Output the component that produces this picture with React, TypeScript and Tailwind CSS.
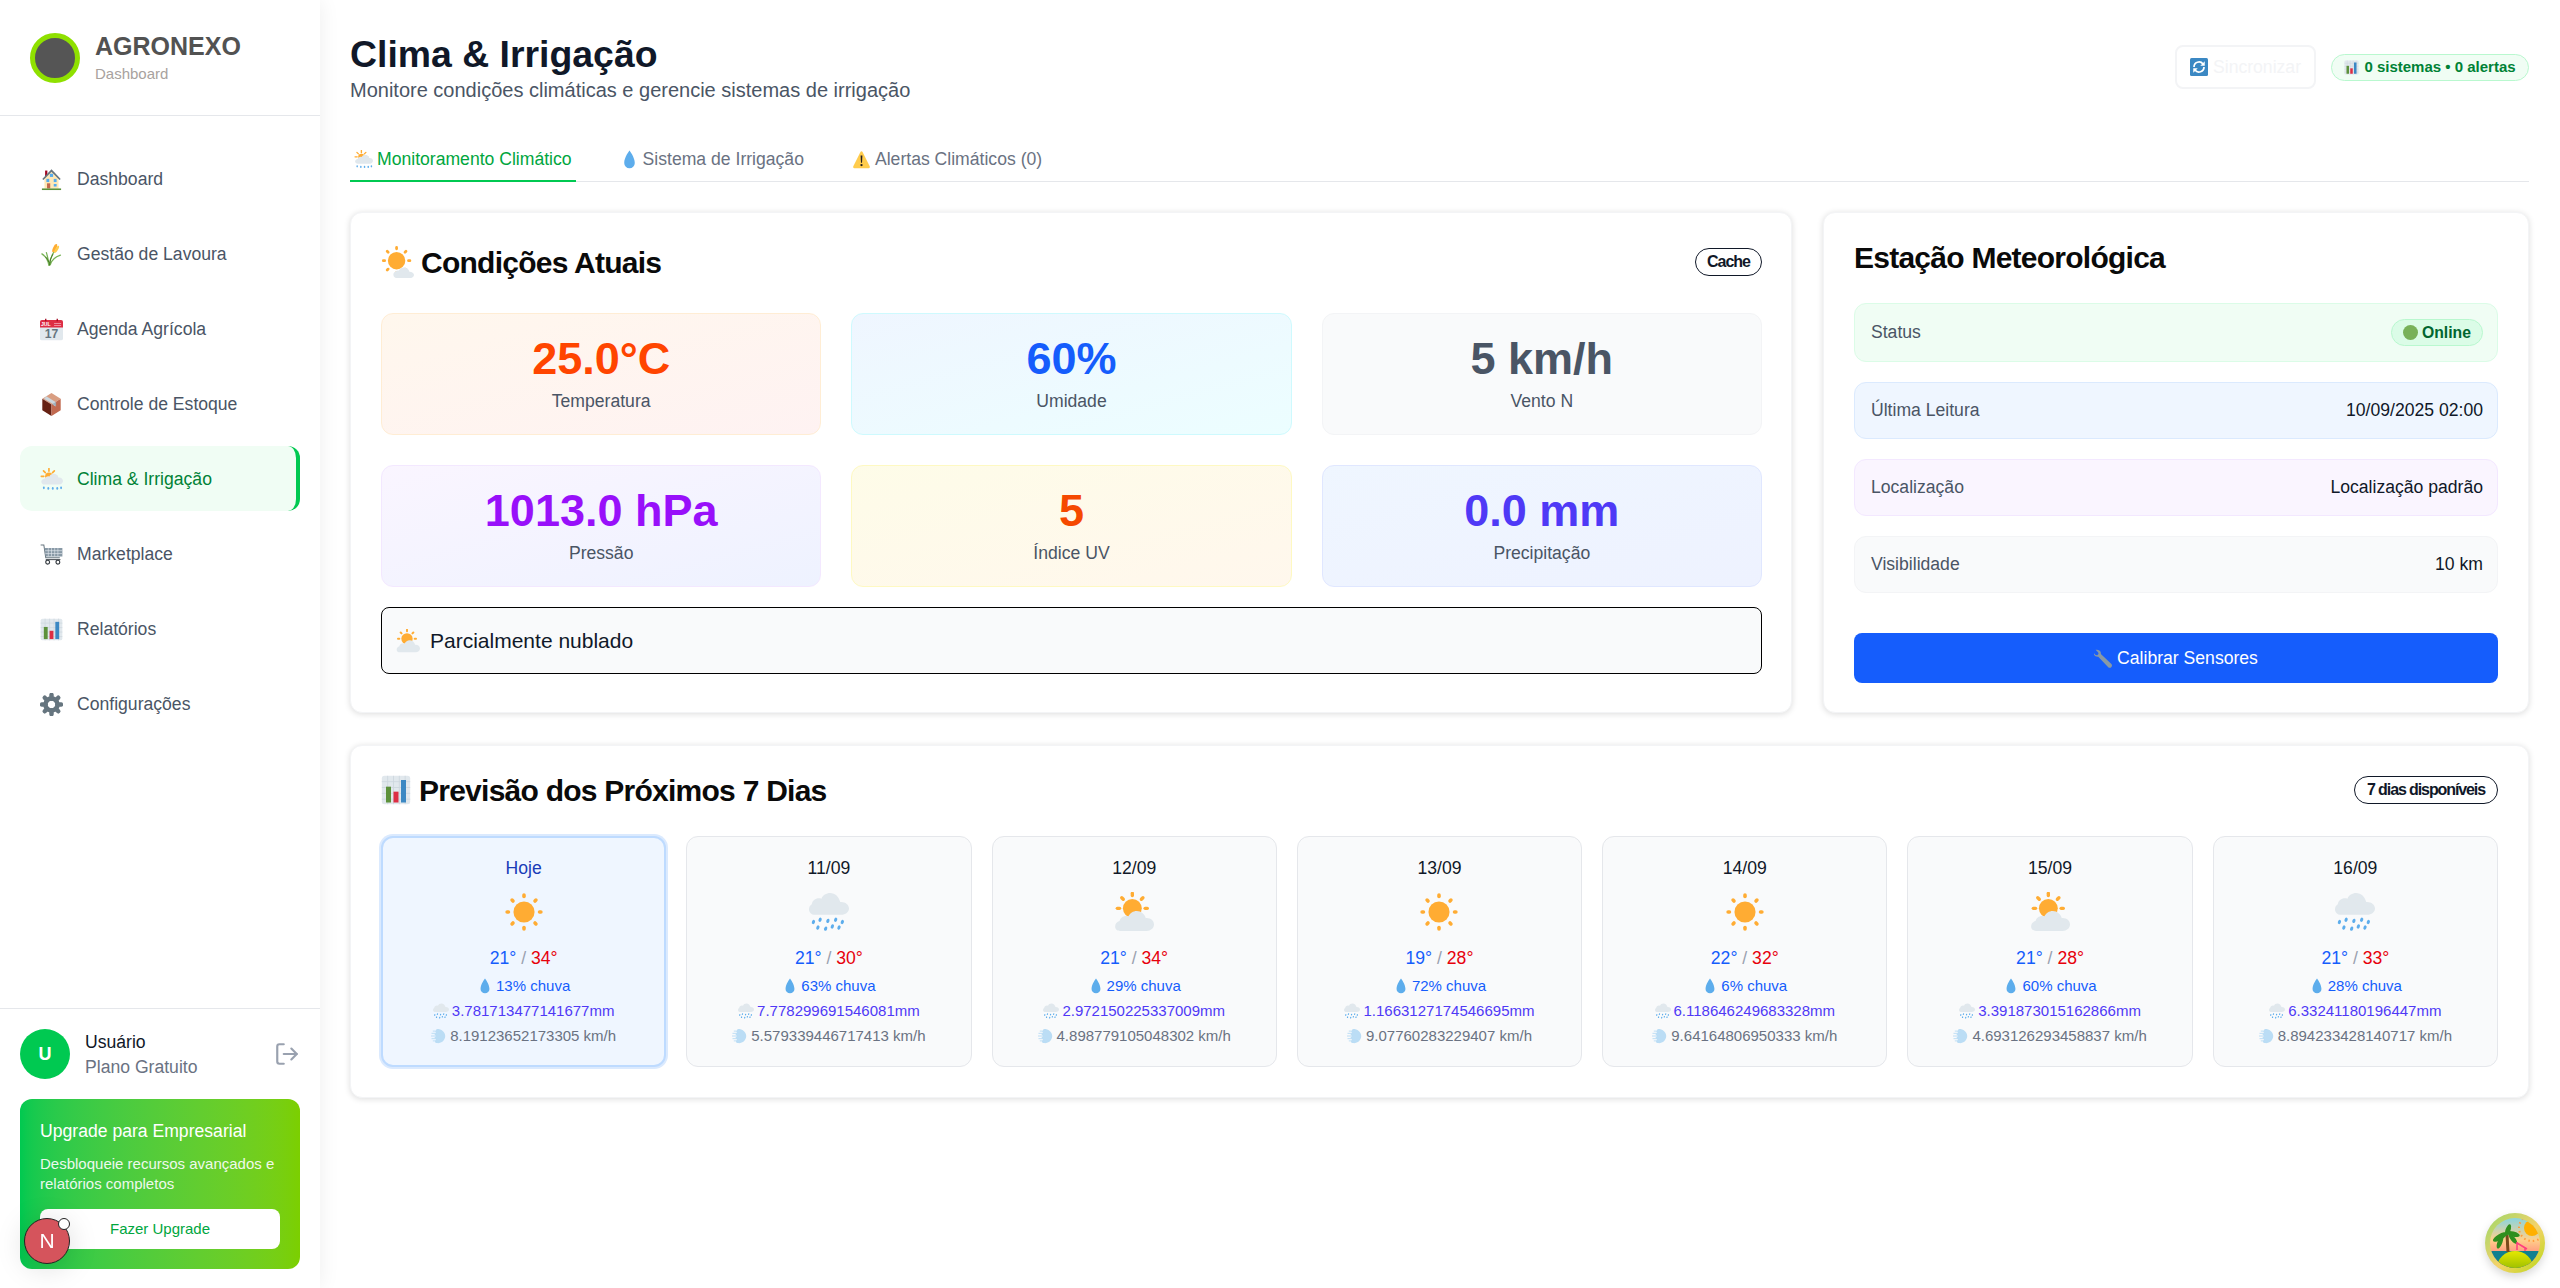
import { LogOut } from 'lucide-react'

type EmojiName =
  | 'house' | 'wheat' | 'calendar' | 'box' | 'sunRain' | 'cart' | 'chart' | 'gear' | 'drop' | 'warning'
  | 'sunSmallCloud' | 'sunCloud' | 'sun' | 'rain' | 'wind' | 'wrench' | 'sync' | 'greenDot'

// sun rays as rounded bars, angle list in degrees
function Rays({ cx, cy, inner, outer, angles, width = 2.6 }: { cx: number; cy: number; inner: number; outer: number; angles: number[]; width?: number }) {
  return (
    <>
      {angles.map((a) => (
        <line
          key={a}
          x1={cx}
          y1={cy - inner}
          x2={cx}
          y2={cy - outer}
          stroke="#FFAC33"
          strokeWidth={width}
          strokeLinecap="round"
          transform={`rotate(${a} ${cx} ${cy})`}
        />
      ))}
    </>
  )
}

const cloudWide = 'M29.5 23.5c-.3 0-.6 0-.9.1C27.8 19.9 24.5 17 20.5 17c-3.3 0-6.2 2-7.5 4.9-.6-.3-1.3-.4-2-.4-3 0-5.5 2-6 4.5C2.8 26.5 1 28.5 1 31c0 2.5 2 4 4.5 4h24c3.5 0 6.5-2.5 6.5-5.8 0-3.2-3-5.7-6.5-5.7z'

function Emoji({ name, size = 24 }: { name: EmojiName; size?: number }) {
  return (
    <svg width={size} height={size} viewBox="0 0 36 36" className="shrink-0 inline-block">
      {name === 'house' && (
        <>
          <rect x="8" y="4" width="3.5" height="9" fill="#A0041E" />
          <path fill="#FFE8B6" d="M7 15 18 4l11 11v17H7z" />
          <path fill="none" stroke="#66757F" strokeWidth="2.6" d="M4.5 18 18 4l13.5 14" />
          <rect x="15.5" y="9" width="5" height="5" fill="#55ACEE" />
          <rect x="10" y="17" width="4.5" height="5" fill="#55ACEE" />
          <rect x="21.5" y="17" width="4.5" height="5" fill="#55ACEE" />
          <rect x="21.5" y="25" width="4.5" height="4" fill="#55ACEE" />
          <rect x="11" y="24" width="5" height="8" fill="#C1694F" />
          <rect x="3" y="32" width="30" height="2.5" fill="#5C913B" />
        </>
      )}
      {name === 'wheat' && (
        <>
          <path fill="none" stroke="#77B255" strokeWidth="2" strokeLinecap="round" d="M14 35C13 27 9 21 3 17M15 35c0-8 3-15 7-21M16 34c2-7 7-12 16-15M14 33c-1-6-2-12-4-18" />
          <ellipse cx="23" cy="8" rx="2.6" ry="7" fill="#FFAC33" transform="rotate(25 23 8)" />
          <ellipse cx="26" cy="10" rx="2.2" ry="6.5" fill="#FFCC4D" transform="rotate(30 26 10)" />
          <path fill="none" stroke="#3E721D" strokeWidth="1.4" strokeLinecap="round" d="M15 34c1-7 2-12 5-16M14 30c-1-3-3-6-5-8" />
        </>
      )}
      {name === 'calendar' && (
        <>
          <path fill="#E1E8ED" d="M36 32a3 3 0 0 1-3 3H3a3 3 0 0 1-3-3V6a3 3 0 0 1 3-3h30a3 3 0 0 1 3 3z" />
          <path fill="#DD2E44" d="M33 3H3a3 3 0 0 0-3 3v9h36V6a3 3 0 0 0-3-3z" />
          <path fill="#A0041E" d="M8 1h2v4H8zM26 1h2v4h-2z" />
          <text x="1.5" y="12" fontSize="8" fontWeight="700" fill="#fff" fontFamily="Liberation Sans, sans-serif">JUL</text>
          <path fill="#F4ABBA" d="M22 8h11v1H22zM22 11h11v1H22z" />
          <text x="18" y="32" fontSize="19" fontWeight="700" textAnchor="middle" fill="#66757F" fontFamily="Liberation Sans, sans-serif">17</text>
        </>
      )}
      {name === 'box' && (
        <g transform="translate(1.8 0) scale(.9 1)">
          <path fill="#D99E82" d="M18 0 34 9 18 18 2 9z" />
          <path fill="#662113" d="M2 9l16 9v18L2 27z" />
          <path fill="#C1694F" d="M34 9 18 18v18l16-9z" />
          <path fill="#CCD6DD" d="M9 5l16 9v7l-5-3v-1L5 9z" />
          <path fill="#99AAB5" d="M20 17l6-3v7l-6-3z" opacity=".8" />
        </g>
      )}
      {name === 'sunRain' && (
        <>
          <circle cx="14" cy="13" r="6" fill="#FFAC33" />
          <Rays cx={14} cy={13} inner={8} outer={12} angles={[-90, -45, 0, 45, 90]} />
          <path fill="#E1E8ED" d="M30 15c-.3 0-.6 0-.9.1C28 11.500 25 9 21.500 9c-3 0-5.600 1.700-6.800 4.300-.7-.2-1.300-.3-2-.3-2.400 0-4.400 1.500-5 3.500C5 17 2 19 2 21.500 2 24 4.500 26 7 26h23c3.300 0 6-2.500 6-5.500S33.300 15 30 15z" />
          <g fill="#5DADEC">
            <ellipse cx="6" cy="31" rx="1.500" ry="2.200" />
            <ellipse cx="13" cy="32" rx="1.500" ry="2.200" />
            <ellipse cx="20" cy="32" rx="1.500" ry="2.200" />
            <ellipse cx="27" cy="32" rx="1.500" ry="2.200" />
            <ellipse cx="33" cy="31" rx="1.500" ry="2.200" />
          </g>
        </>
      )}
      {name === 'cart' && (
        <>
          <path fill="none" stroke="#66757F" strokeWidth="1.6" d="M1 3h5l3 20h22" />
          <path fill="#8899A6" d="M7 8h28v13H9z" />
          <path stroke="#E1E8ED" strokeWidth="1" d="M8 12h27M8.500 16.500h26M13 8v13M18 8v13M23 8v13M28 8v13" />
          <circle cx="12" cy="30" r="3" fill="#fff" stroke="#31373D" strokeWidth="1.8" />
          <circle cx="28" cy="30" r="3" fill="#fff" stroke="#31373D" strokeWidth="1.8" />
          <path fill="none" stroke="#31373D" strokeWidth="1.400" d="M9 26h23" />
        </>
      )}
      {name === 'chart' && (
        <>
          <rect x="1" y="1" width="34" height="34" rx="3" fill="#E1E8ED" />
          <path stroke="#CCD6DD" strokeWidth="1" d="M1 8h34M1 15h34M1 22h34M1 29h34M8 1v34M15 1v34M22 1v34M29 1v34" />
          <rect x="6" y="14" width="6" height="19" fill="#5C913B" />
          <rect x="15" y="20" width="6" height="13" fill="#DD2E44" />
          <rect x="24" y="6" width="6" height="27" fill="#3B88C3" />
        </>
      )}
      {name === 'gear' && (
        <g stroke="#66757F">
          <circle cx="18" cy="18" r="9.500" fill="none" strokeWidth="7" />
          {[0, 45, 90, 135, 180, 225, 270, 315].map((a) => (
            <line key={a} x1="18" y1="9" x2="18" y2="3" strokeWidth="7" strokeLinecap="round" transform={`rotate(${a} 18 18)`} />
          ))}
        </g>
      )}
      {name === 'drop' && <path fill="#5DADEC" d="M18 1S8 14 8 24.500a10 10 0 0 0 20 0C28 14 18 1 18 1z" />}
      {name === 'warning' && (
        <>
          <path fill="#FFCC4D" d="M2.500 31 16 4c1-2 3-2 4 0l13.500 27c1 2 0 3.500-2 3.500h-27c-2 0-3-1.500-2-3.500z" />
          <path fill="#231F20" d="M16.300 10.500h3.400L19 24h-2z" />
          <circle cx="18" cy="28.500" r="2.200" fill="#231F20" />
        </>
      )}
      {name === 'sunSmallCloud' && (
        <>
          <circle cx="17" cy="16" r="9.500" fill="#FFAC33" />
          <Rays cx={17} cy={16} inner={13} outer={14.500} angles={[0, 45, 90, 135, 180, 225, 270, 315]} width={3} />
          <path fill="#E1E8ED" d="M31 28c-.6-2.800-3-4.500-6-4.500-2.500 0-4.500 1.300-5.500 3.300-3 0-6 2-6 4.500S15.500 35 18 35h13c2.800 0 5-1.700 5-3.500s-2.200-3.500-5-3.500z" />
        </>
      )}
      {name === 'sunCloud' && (
        <>
          <Rays cx={16.500} cy={14.700} inner={11.500} outer={13.500} angles={[-90, -45, 0, 45, 90]} width={3} />
          <circle cx="16.500" cy="14.700" r="8.500" fill="#FFAC33" />
          <path fill="#E1E8ED" d={cloudWide} />
        </>
      )}
      {name === 'sun' && (
        <>
          <circle cx="18" cy="18" r="9.500" fill="#FFAC33" />
          <Rays cx={18} cy={18} inner={14} outer={15.200} angles={[0, 45, 90, 135, 180, 225, 270, 315]} width={3.200} />
        </>
      )}
      {name === 'rain' && (
        <>
          <path fill="#E1E8ED" d="M29 9c-.3 0-.6 0-.9.1C27 4.500 23.500 1 19 1c-3.500 0-6.500 2-7.800 5-.7-.2-1.400-.3-2.200-.3C5.500 5.700 3 8 2.500 11 1 12 0 13.500 0 15.500 0 18.500 2.500 20.500 5 20.500h24c3.800 0 7-2.500 7-5.700S32.800 9 29 9z" />
          <g fill="#5DADEC">
            <ellipse cx="4" cy="27" rx="1.400" ry="2" transform="rotate(20 4 27)" />
            <ellipse cx="10" cy="25" rx="1.400" ry="2" transform="rotate(20 10 25)" />
            <ellipse cx="17" cy="26" rx="1.400" ry="2" transform="rotate(20 17 26)" />
            <ellipse cx="24" cy="25" rx="1.400" ry="2" transform="rotate(20 24 25)" />
            <ellipse cx="30" cy="27" rx="1.400" ry="2" transform="rotate(20 30 27)" />
            <ellipse cx="8" cy="32" rx="1.400" ry="2" transform="rotate(20 8 32)" />
            <ellipse cx="15" cy="33" rx="1.400" ry="2" transform="rotate(20 15 33)" />
            <ellipse cx="21" cy="31" rx="1.400" ry="2" transform="rotate(20 21 31)" />
            <ellipse cx="27" cy="32" rx="1.400" ry="2" transform="rotate(20 27 32)" />
          </g>
        </>
      )}
      {name === 'wind' && (
        <>
          <path fill="#BBDDF5" d="M14 2c9 0 18 6 18 16s-9 17-18 16c-3 0-5-1.500-5-3 0-2 2-3 2-5s-3-2-3-4 3-2 3-4-3-2-3-4 3-2 3-4-3-2 0-4c1-3 1-4 3-4z" />
          <g stroke="#BBDDF5" strokeWidth="2.200" strokeLinecap="round">
            <path d="M2 12h9M0 18h11M2 24h9M5 7h6M5 29h6" />
          </g>
        </>
      )}
      {name === 'wrench' && (
        <path fill="#8899A6" d="M3 1.500 8 6.500l.5 3-2.500 2.500-3-.5L-1 7C-1 12 3 15 8 14.500l19 20c1.500 1.500 4.500 1.500 6-.5s1.500-4-.5-6L13 9.500C14 4 9 .5 3 1.500z" />
      )}
      {name === 'sync' && (
        <>
          <rect width="36" height="36" rx="3" fill="#3B88C3" />
          <path fill="none" stroke="#fff" strokeWidth="3.500" d="M8 18a10 10 0 0 1 18-6M28 18a10 10 0 0 1-18 6" />
          <path fill="#fff" d="M29.500 6.500v9h-9zM6.500 29.500v-9h9z" />
        </>
      )}
      {name === 'greenDot' && <circle cx="18" cy="18" r="18" fill="#78B159" />}
    </svg>
  )
}

const navItems: { icon: EmojiName; label: string; active?: boolean }[] = [
  { icon: 'house', label: 'Dashboard' },
  { icon: 'wheat', label: 'Gestão de Lavoura' },
  { icon: 'calendar', label: 'Agenda Agrícola' },
  { icon: 'box', label: 'Controle de Estoque' },
  { icon: 'sunRain', label: 'Clima & Irrigação', active: true },
  { icon: 'cart', label: 'Marketplace' },
  { icon: 'chart', label: 'Relatórios' },
  { icon: 'gear', label: 'Configurações' },
]

const forecast: { day: string; icon: EmojiName; min: number; max: number; chance: number; rain: string; wind: string; today?: boolean }[] = [
  { day: 'Hoje', icon: 'sun', min: 21, max: 34, chance: 13, rain: '3.781713477141677', wind: '8.19123652173305', today: true },
  { day: '11/09', icon: 'rain', min: 21, max: 30, chance: 63, rain: '7.778299691546081', wind: '5.579339446717413' },
  { day: '12/09', icon: 'sunCloud', min: 21, max: 34, chance: 29, rain: '2.972150225337009', wind: '4.898779105048302' },
  { day: '13/09', icon: 'sun', min: 19, max: 28, chance: 72, rain: '1.1663127174546695', wind: '9.07760283229407' },
  { day: '14/09', icon: 'sun', min: 22, max: 32, chance: 6, rain: '6.118646249683328', wind: '9.64164806950333' },
  { day: '15/09', icon: 'sunCloud', min: 21, max: 28, chance: 60, rain: '3.391873015162866', wind: '4.693126293458837' },
  { day: '16/09', icon: 'rain', min: 21, max: 33, chance: 28, rain: '6.33241180196447', wind: '8.894233428140717' },
]

function Sidebar() {
  return (
    <aside className="w-[320px] h-[1288px] shrink-0 flex flex-col bg-white shadow-[0_0_20px_rgba(0,0,0,0.07)] z-10">
      <div className="h-[116px] shrink-0 border-b border-gray-200 flex items-center pl-[30px] gap-[15px]">
        <div className="w-[50px] h-[50px] rounded-full bg-[#555555] border-[5px] border-[#8fe000]" />
        <div>
          <div className="text-[25px] leading-[30px] font-bold text-[#525252]">AGRONEXO</div>
          <div className="text-[15px] leading-[20px] mt-[3px] text-[#a8a29e]">Dashboard</div>
        </div>
      </div>
      <nav className="flex flex-col gap-[10px] px-[20px] pt-[30px]">
        {navItems.map((item) => (
          <a
            key={item.label}
            className={
              item.active
                ? 'h-[65px] flex items-center gap-[14px] pl-[20px] pt-[2px] rounded-xl bg-green-50 text-[#008236] text-[17.6px] border-r-[4px] border-green-500'
                : 'h-[65px] flex items-center gap-[14px] pl-[20px] pt-[2px] text-[#4a5565] text-[17.6px]'
            }
          >
            <Emoji name={item.icon} size={23} />
            {item.label}
          </a>
        ))}
      </nav>
      <div className="mt-auto border-t border-gray-200 px-[20px] pt-[20px] pb-[19px]">
        <div className="flex items-center gap-[15px]">
          <div className="w-[50px] h-[50px] rounded-full bg-green-500 flex items-center justify-center text-white font-bold text-[18px]">U</div>
          <div className="flex-1 h-[50px] pt-[1px]">
            <div className="text-[17.6px] leading-[25px] text-gray-900">Usuário</div>
            <div className="text-[17.6px] leading-[25px] text-gray-500">Plano Gratuito</div>
          </div>
          <LogOut size={26} className="text-gray-400" strokeWidth={2} />
        </div>
        <div className="mt-[20px] h-[170px] rounded-xl bg-gradient-to-r from-[#00c950] to-[#7ccf00] px-[20px] pt-[20px] text-white">
          <div className="text-[17.6px] leading-[24px]">Upgrade para Empresarial</div>
          <div className="text-[15px] leading-[20px] mt-[11px] opacity-90">Desbloqueie recursos avançados e relatórios completos</div>
          <button className="mt-[15px] w-full h-[40px] rounded-lg bg-white text-[#00a63e] text-[15px]">Fazer Upgrade</button>
        </div>
      </div>
    </aside>
  )
}

function Tile({ value, label, tone, valueTone }: { value: string; label: string; tone: string; valueTone: string }) {
  return (
    <div className={`h-[122px] rounded-xl border pt-[18px] flex flex-col items-center ${tone}`}>
      <div className={`text-[45px] leading-[54px] font-bold ${valueTone}`}>{value}</div>
      <div className="text-[17.6px] leading-[26px] mt-[2px] text-[#4a5565]">{label}</div>
    </div>
  )
}

function InfoRow({ label, tone, height, children }: { label: string; tone: string; height: string; children: React.ReactNode }) {
  return (
    <div className={`${height} rounded-xl border flex items-center justify-between pl-[16px] pr-[14px] ${tone}`}>
      <span className="text-[17.6px] text-[#4a5565]">{label}</span>
      {children}
    </div>
  )
}

function DayCard({ d }: { d: (typeof forecast)[number] }) {
  return (
    <div
      className={
        d.today
          ? 'h-[231px] rounded-xl border-2 border-blue-200 bg-[#eff6ff] ring-2 ring-blue-100 pt-[19px] flex flex-col items-center'
          : 'h-[231px] rounded-xl border border-gray-200 bg-gray-50 pt-[20px] flex flex-col items-center'
      }
    >
      <div className={d.today ? 'text-[17.6px] leading-[22px] text-[#193cb8]' : 'text-[17.6px] leading-[22px] text-gray-900'}>{d.day}</div>
      <div className="mt-[13px] h-[40px]">
        <Emoji name={d.icon} size={40} />
      </div>
      <div className="mt-[14px] text-[17.6px] leading-[24px]">
        <span className="text-[#155dfc]">{d.min}°</span>
        <span className="text-gray-400"> / </span>
        <span className="text-[#e7000b]">{d.max}°</span>
      </div>
      <div className="mt-[6px] text-[15px] leading-[20px] text-[#155dfc] flex items-center gap-[3px]">
        <Emoji name="drop" size={16} />
        {d.chance}% chuva
      </div>
      <div className="mt-[5px] text-[15px] leading-[20px] text-[#4f39f6] flex items-center gap-[3px]">
        <Emoji name="rain" size={16} />
        {d.rain}mm
      </div>
      <div className="mt-[5px] text-[15px] leading-[20px] text-[#6a7282] flex items-center gap-[3px]">
        <Emoji name="wind" size={16} />
        {d.wind} km/h
      </div>
    </div>
  )
}

function Main() {
  return (
    <main className="flex-1 min-w-0 pl-[30px] pr-[31px] pt-[30px]">
      <div className="flex justify-between">
        <div>
          <h1 className="text-[37.4px] leading-[48px] font-bold text-gray-900">Clima & Irrigação</h1>
          <p className="text-[20px] leading-[24px] text-[#4a5565]">Monitore condições climáticas e gerencie sistemas de irrigação</p>
        </div>
        <div className="flex items-center gap-[15px] h-[44px] mt-[15px]">
          <button className="h-[44px] w-[141px] rounded-lg border-2 border-gray-100 flex items-center justify-center gap-[5px] text-[17.6px] text-gray-100">
            <Emoji name="sync" size={18} />
            Sincronizar
          </button>
          <div className="h-[27px] w-[198px] rounded-full border border-green-200 bg-green-50 flex items-center justify-center gap-[5px] text-[15px] font-bold text-[#008236]">
            <Emoji name="chart" size={15} />
            0 sistemas • 0 alertas
          </div>
        </div>
      </div>

      <div className="mt-[33px] flex gap-[40px] border-b border-gray-200 h-[47px]">
        <div className="h-[47px] px-[4px] pt-[3px] flex items-center gap-[4px] text-[17.6px] text-[#00a63e] border-b-2 border-green-500">
          <Emoji name="sunRain" size={19} />
          Monitoramento Climático
        </div>
        <div className="h-[47px] px-[4px] pt-[3px] flex items-center gap-[4px] text-[17.6px] text-gray-500 border-b-2 border-transparent">
          <Emoji name="drop" size={19} />
          Sistema de Irrigação
        </div>
        <div className="h-[47px] px-[4px] pt-[3px] flex items-center gap-[4px] text-[17.6px] text-gray-500 border-b-2 border-transparent">
          <Emoji name="warning" size={19} />
          Alertas Climáticos (0)
        </div>
      </div>

      <div className="mt-[30px] flex gap-[31px]">
        <section className="flex-1 min-w-0 rounded-xl border border-gray-100 bg-white shadow-[0_1px_6px_rgba(0,0,0,0.14)] pl-[30px] pr-[29px] pt-[30px] pb-[38px]">
          <div className="h-[38px] mb-[32px] flex items-center justify-between">
            <h2 className="flex items-center gap-[7px] text-[30px] font-bold text-[#0a0a0a] tracking-tight">
              <Emoji name="sunSmallCloud" size={33} />
              Condições Atuais
            </h2>
            <span className="h-[28px] px-[11px] rounded-full border border-gray-900 bg-white flex items-center text-[16px] font-bold tracking-[-1px] text-gray-900">Cache</span>
          </div>
          <div className="grid grid-cols-3 gap-[30px]">
            <Tile value="25.0°C" label="Temperatura" tone="bg-gradient-to-br from-orange-50 to-red-50 border-orange-100" valueTone="text-[#ff4500]" />
            <Tile value="60%" label="Umidade" tone="bg-gradient-to-br from-blue-50 to-cyan-50 border-cyan-100" valueTone="text-[#155dfc]" />
            <Tile value="5 km/h" label="Vento N" tone="bg-gray-50 border-gray-100" valueTone="text-[#4a5565]" />
            <Tile value="1013.0 hPa" label="Pressão" tone="bg-gradient-to-br from-purple-50 to-indigo-50 border-purple-100" valueTone="text-[#9810fa]" />
            <Tile value="5" label="Índice UV" tone="bg-gradient-to-br from-yellow-50 to-orange-50 border-yellow-100" valueTone="text-[#f54900]" />
            <Tile value="0.0 mm" label="Precipitação" tone="bg-gradient-to-br from-blue-50 to-indigo-50 border-indigo-100" valueTone="text-[#4f39f6]" />
          </div>
          <div className="mt-[20px] h-[67px] rounded-lg border border-black bg-gray-50 flex items-center gap-[10px] px-[14px] text-[21px] text-gray-900">
            <Emoji name="sunCloud" size={24} />
            Parcialmente nublado
          </div>
        </section>

        <section className="w-[706px] shrink-0 rounded-xl border border-gray-100 bg-white shadow-[0_1px_6px_rgba(0,0,0,0.14)] px-[30px] pt-[30px]">
          <h2 className="text-[30px] leading-[30px] mb-[30px] font-bold text-[#0a0a0a] tracking-tight">Estação Meteorológica</h2>
          <div className="flex flex-col gap-[20px]">
            <InfoRow label="Status" tone="bg-green-50 border-green-100" height="h-[59px]">
              <span className="h-[27px] px-[11px] rounded-full bg-green-100 border border-green-200 flex items-center gap-[4px] text-[15.75px] font-bold text-[#016630]">
                <Emoji name="greenDot" size={15} />
                Online
              </span>
            </InfoRow>
            <InfoRow label="Última Leitura" tone="bg-blue-50 border-blue-100" height="h-[57px]">
              <span className="text-[17.6px] text-gray-900">10/09/2025 02:00</span>
            </InfoRow>
            <InfoRow label="Localização" tone="bg-purple-50 border-purple-100" height="h-[57px]">
              <span className="text-[17.6px] text-gray-900">Localização padrão</span>
            </InfoRow>
            <InfoRow label="Visibilidade" tone="bg-gray-50 border-gray-100" height="h-[57px]">
              <span className="text-[17.6px] text-gray-900">10 km</span>
            </InfoRow>
          </div>
          <button className="mt-[40px] w-full h-[50px] rounded-lg bg-[#155dfc] text-white text-[17.6px] flex items-center justify-center gap-[4px]">
            <Emoji name="wrench" size={19} />
            Calibrar Sensores
          </button>
        </section>
      </div>

      <section className="mt-[32px] rounded-xl border border-gray-100 bg-white shadow-[0_1px_6px_rgba(0,0,0,0.14)] px-[30px] pt-[30px] pb-[30px]">
        <div className="h-[28px] mb-[32px] flex items-center justify-between">
          <h2 className="flex items-center gap-[8px] text-[30px] font-bold text-[#0a0a0a] tracking-tight">
            <Emoji name="chart" size={30} />
            Previsão dos Próximos 7 Dias
          </h2>
          <span className="h-[28px] px-[12px] rounded-full border border-gray-900 bg-white flex items-center text-[16px] font-bold tracking-[-1.1px] text-gray-900">7 dias disponíveis</span>
        </div>
        <div className="grid grid-cols-7 gap-[20px]">
          {forecast.map((d) => (
            <DayCard key={d.day} d={d} />
          ))}
        </div>
      </section>
    </main>
  )
}

function NextBadge() {
  return (
    <div className="fixed left-[24px] bottom-[24px] z-20 w-[46px] h-[46px] rounded-full bg-[#d5545c] border-[1.5px] border-[#222] shadow-[0_4px_30px_rgba(0,0,0,0.15)] flex items-center justify-center text-white text-[21px]">
      N
      <span className="absolute -top-[1px] -right-[1px] w-[12px] h-[12px] rounded-full bg-white border border-[#222]" />
    </div>
  )
}

function IslandBadge() {
  return (
    <svg width="60" height="60" viewBox="0 0 60 60" className="fixed right-[15px] bottom-[15px] z-20 drop-shadow-lg">
      <defs>
        <linearGradient id="ring" x1="0" y1="0" x2="1" y2="1">
          <stop offset="0" stopColor="#9ad86a" />
          <stop offset=".55" stopColor="#f5d26a" />
          <stop offset="1" stopColor="#b6d911" />
        </linearGradient>
        <linearGradient id="sky" x1="0" y1="0" x2="0" y2="1">
          <stop offset="0" stopColor="#6fd6f2" />
          <stop offset=".45" stopColor="#ffd08a" />
          <stop offset=".7" stopColor="#ff8f7e" />
        </linearGradient>
        <linearGradient id="hill" x1="0" y1="0" x2="0" y2="1">
          <stop offset="0" stopColor="#e6e800" />
          <stop offset="1" stopColor="#5a9a00" />
        </linearGradient>
        <clipPath id="disc">
          <circle cx="30" cy="30" r="25" />
        </clipPath>
      </defs>
      <circle cx="30" cy="30" r="30" fill="url(#ring)" />
      <g clipPath="url(#disc)">
        <rect width="60" height="60" fill="url(#sky)" />
        <circle cx="47" cy="15" r="8" fill="#ffb000" />
        <circle cx="47" cy="15" r="13" fill="none" stroke="#ff9a3c" strokeWidth="2" strokeDasharray="1.500 3" />
        <rect y="38" width="60" height="22" fill="#10808f" />
        <path d="M23 39 22 22" stroke="#7a4a1c" strokeWidth="3" fill="none" />
        <g fill="#2f8f1e">
          <ellipse cx="15" cy="24" rx="8" ry="3" transform="rotate(-30 15 24)" />
          <ellipse cx="15" cy="29" rx="7" ry="2.500" transform="rotate(-70 15 29)" />
          <ellipse cx="23" cy="17" rx="6" ry="2.500" transform="rotate(-70 23 17)" />
          <ellipse cx="28" cy="21" rx="7" ry="2.500" transform="rotate(15 28 21)" />
          <ellipse cx="28" cy="26" rx="6" ry="2.200" transform="rotate(50 28 26)" />
        </g>
        <path d="M32 29v8M32 30l10 6M40 34v4" stroke="#ff3d7f" strokeWidth="1.500" fill="none" />
        <ellipse cx="30" cy="55" rx="18" ry="17" fill="url(#hill)" />
      </g>
    </svg>
  )
}

export default function App() {
  return (
    <div className="flex h-[1288px] overflow-hidden bg-white font-['Liberation_Sans',Arial,sans-serif]">
      <Sidebar />
      <Main />
      <NextBadge />
      <IslandBadge />
    </div>
  )
}
